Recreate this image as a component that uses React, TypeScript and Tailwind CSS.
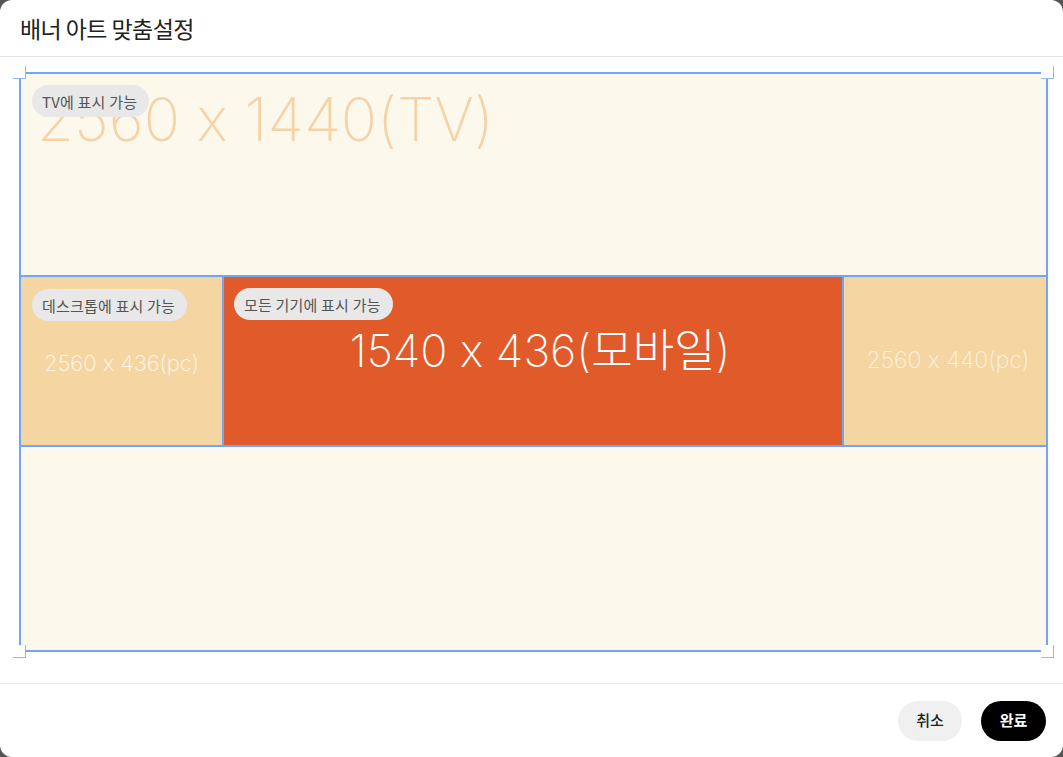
import React from 'react';

const sans = { fontFamily: '"Noto Sans CJK KR", "Noto Sans", sans-serif' };
// Inter turns "x" between digits into "×" through calt; the reference keeps a plain x
const thin = { fontFamily: 'Inter, "Noto Sans CJK KR", sans-serif', fontFeatureSettings: '"calt" 0' };

function Pill({ children }: { children: React.ReactNode }) {
  return (
    <span className="inline-flex items-center h-[32px] pl-[10px] pr-[12px] rounded-full bg-[#e8e8e8] text-[15px] text-[#555] leading-none whitespace-nowrap tracking-[0.2px]">
      {children}
    </span>
  );
}

function Handle({ className }: { className: string }) {
  return (
    <div className={`absolute w-[13px] h-[13px] bg-white border-r border-b border-[#8fb8f5] ${className}`} />
  );
}

export default function App() {
  return (
    <div className="w-[1063px] h-[757px] bg-[#555]" style={sans}>
      <div className="w-full h-full bg-white rounded-[12px] overflow-hidden flex flex-col">
        {/* header */}
        <div className="h-[57px] flex items-center px-[20px] border-b border-[#e3e3e3] shrink-0">
          <h1 className="text-[23px] font-normal text-[#222] tracking-tight">배너 아트 맞춤설정</h1>
        </div>

        {/* canvas */}
        <div className="flex-1 pt-[15px] pl-[19px] pr-[15px] pb-[31px]">
          <div className="relative h-[580px] border-2 border-[#6fa6f5] bg-[#fdf8ec] flex flex-col">
            <Handle className="-left-[8px] -top-[8px]" />
            <Handle className="-right-[8px] -top-[8px]" />
            <Handle className="-left-[8px] -bottom-[8px]" />
            <Handle className="-right-[8px] -bottom-[8px]" />

            {/* TV area */}
            <div className="h-[201px] relative">
              <div
                className="absolute left-[16px] top-[15px] text-[60px] font-extralight text-[#f6d2a6] leading-none whitespace-nowrap"
                style={thin}
              >
                2560 x 1440(TV)
              </div>
              <div className="absolute left-[11px] top-[11px]">
                <Pill>TV에 표시 가능</Pill>
              </div>
            </div>

            {/* desktop / mobile row */}
            <div className="h-[172px] flex border-y-2 border-[#6fa6f5] bg-[#f5d6a2]">
              <div className="w-[201px] relative flex items-center justify-center">
                <div className="absolute left-[11px] top-[12px]">
                  <Pill>데스크톱에 표시 가능</Pill>
                </div>
                <span className="mt-[4px] text-[22px] font-extralight text-white/80 whitespace-nowrap" style={thin}>
                  2560 x 436(pc)
                </span>
              </div>
              <div className="w-[622px] relative bg-[#e05a2a] border-x-2 border-[#6fa6f5]">
                <div className="absolute left-[10px] top-[11px]">
                  <Pill>모든 기기에 표시 가능</Pill>
                </div>
                <div
                  className="absolute inset-x-0 top-[51px] pl-[14px] text-center text-[45px] font-extralight text-white whitespace-nowrap leading-none"
                  style={thin}
                >
                  1540 x 436(모바일)
                </div>
              </div>
              <div className="flex-1 flex items-center justify-center pl-[6px]">
                <span className="-mt-[2px] text-[23px] font-extralight text-white/70 whitespace-nowrap" style={thin}>
                  2560 x 440(pc)
                </span>
              </div>
            </div>

            <div className="flex-1" />
          </div>
        </div>

        {/* footer */}
        <div className="h-[74px] shrink-0 border-t border-[#e6e6e6] flex items-center justify-end gap-[19px] px-[17px]">
          <button className="h-[40px] w-[64px] rounded-full bg-[#f0f0f0] text-[15px] font-medium text-[#222]">취소</button>
          <button className="h-[40px] w-[65px] rounded-full bg-black text-[15px] font-bold text-white">완료</button>
        </div>
      </div>
    </div>
  );
}
